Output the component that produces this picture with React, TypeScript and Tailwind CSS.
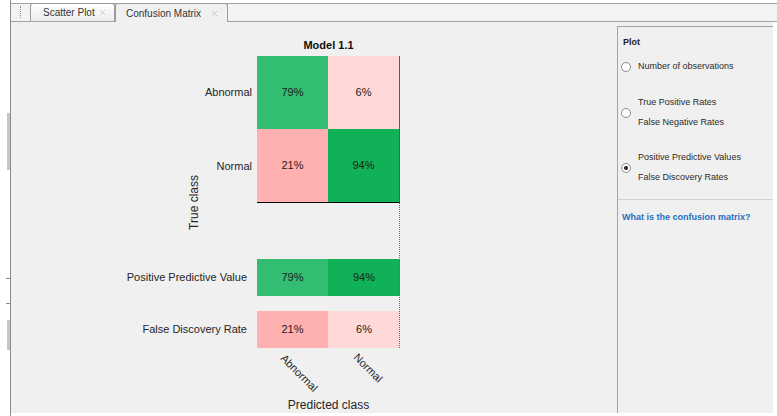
import { X } from 'lucide-react';

const GREEN = 'bg-[#32bd72]';
const DARK_GREEN = 'bg-[#11b157]';
const PINK = 'bg-[#ffb1b1]';
const LIGHT_PINK = 'bg-[#ffd8d8]';

function Tab({ label, active, className }: { label: string; active?: boolean; className: string }) {
  return (
    <div
      className={`flex h-[18px] items-center justify-between rounded-t-[3px] border border-b-0 border-[#9c9c9c] text-[10px] text-[#333] ${
        active ? 'relative -mb-px h-[19px] bg-[#f0f0f0]' : 'bg-gradient-to-b from-white to-[#ececec]'
      } ${className}`}
    >
      <span>{label}</span>
      <X size={9} strokeWidth={1.75} className="text-[#b4b4b4]" />
    </div>
  );
}

function Cell({ value, tone, className = '' }: { value: string; tone: string; className?: string }) {
  return (
    <div className={`flex items-center justify-center text-[11px] text-[#1c1c1c] ${tone} ${className}`}>
      {value}
    </div>
  );
}

function Radio({ checked, lines }: { checked?: boolean; lines: string[] }) {
  return (
    <div className="flex items-center pl-[3px]">
      <span className="flex h-[10px] w-[10px] items-center justify-center rounded-full border border-[#8a8a8a] bg-white">
        {checked && <span className="h-[4px] w-[4px] rounded-full bg-[#222]" />}
      </span>
      <div className="ml-[7px] flex flex-col gap-[9px] text-[9px] leading-[11px] text-[#2b2b2b]">
        {lines.map((line) => (
          <span key={line}>{line}</span>
        ))}
      </div>
    </div>
  );
}

function MatrixPlot() {
  return (
    <div className="grid flex-1 grid-cols-[176px_14px_56px_71px_72px] grid-rows-[34px_73px_74px_56px_37px_15px_37px_50px_14px] text-[#262626]">
      <div className="col-span-2 col-start-4 row-start-1 flex items-end justify-center pb-[4px] text-[11px] leading-[13px] font-bold text-[#111]">
        Model 1.1
      </div>

      <div className="col-start-2 row-span-6 row-start-2 flex items-center justify-center">
        <span className="rotate-180 text-[12px] leading-[14px] [writing-mode:vertical-rl]">True class</span>
      </div>

      <div className="col-start-3 row-start-2 flex items-center justify-end pr-[5px] text-[11px]">Abnormal</div>
      <div className="col-start-3 row-start-3 flex items-center justify-end pr-[5px] text-[11px]">Normal</div>

      <Cell value="79%" tone={GREEN} className="col-start-4 row-start-2" />
      <Cell value="6%" tone={LIGHT_PINK} className="col-start-5 row-start-2 border-r border-[#5a5a5a]" />
      <Cell value="21%" tone={PINK} className="col-start-4 row-start-3 border-b border-black" />
      <Cell value="94%" tone={DARK_GREEN} className="col-start-5 row-start-3 border-r border-b border-[#5a5a5a] border-b-black" />

      <div className="col-span-3 col-start-1 row-start-5 flex items-center justify-end pr-[10px] text-[11px] whitespace-nowrap">
        Positive Predictive Value
      </div>
      <div className="col-span-3 col-start-1 row-start-7 flex items-center justify-end pr-[10px] text-[11px] whitespace-nowrap">
        False Discovery Rate
      </div>

      <Cell value="79%" tone={GREEN} className="col-start-4 row-start-5" />
      <Cell value="94%" tone={DARK_GREEN} className="col-start-5 row-start-5" />
      <Cell value="21%" tone={PINK} className="col-start-4 row-start-7" />
      <Cell value="6%" tone={LIGHT_PINK} className="col-start-5 row-start-7" />

      {/* dotted edge below the matrix */}
      <div className="pointer-events-none col-start-5 row-span-4 row-start-4 border-r border-dotted border-[#6a6a6a]" />

      <div className="col-start-4 row-start-8">
        <span className="mt-[4px] ml-[30px] block w-max origin-top-left rotate-45 text-[11px] leading-[13px]">
          Abnormal
        </span>
      </div>
      <div className="col-start-5 row-start-8">
        <span className="mt-[3px] ml-[32px] block w-max origin-top-left rotate-45 text-[11px] leading-[13px]">
          Normal
        </span>
      </div>

      <div className="col-span-2 col-start-4 row-start-9 text-center text-[12px] leading-[14px]">Predicted class</div>
    </div>
  );
}

function OptionsPanel() {
  return (
    <div className="mt-[4px] flex w-[156px] flex-col border-t border-l border-[#a3a3a3]">
      <div className="pt-[10px] pl-[5px] text-[9px] leading-[11px] font-bold text-[#222]">Plot</div>
      <div className="mt-[13px]">
        <Radio lines={['Number of observations']} />
      </div>
      <div className="mt-[25px]">
        <Radio lines={['True Positive Rates', 'False Negative Rates']} />
      </div>
      <div className="mt-[24px]">
        <Radio checked lines={['Positive Predictive Values', 'False Discovery Rates']} />
      </div>
      <div className="mt-[16px] border-t border-[#d2d2d2]" />
      <div className="mt-[12px] pl-[4px] text-[9px] leading-[11px] font-bold text-[#1f6fc3]">
        What is the confusion matrix?
      </div>
    </div>
  );
}

export default function App() {
  return (
    <div className="flex h-[416px] w-[777px] overflow-hidden bg-white font-['Liberation_Sans',Arial,sans-serif]">
      {/* docked browser edge on the left */}
      <div className="flex w-[11px] flex-col items-end border-r border-[#8c8c8c] bg-white">
        <div className="mt-[113px] h-[57px] w-[3px] bg-[#c6c6c6]" />
        <div className="mt-[108px] h-px w-[4px] bg-[#8c8c8c]" />
        <div className="mt-[24px] h-px w-[4px] bg-[#8c8c8c]" />
        <div className="mt-[16px] h-[30px] w-[3px] bg-[#c6c6c6]" />
      </div>

      <div className="flex flex-1 flex-col">
        <div className="pt-[3px]">
          <div className="flex h-[19px] items-end border-t border-b border-[#a3a3a3] bg-[#f3f3f3]">
            <div className="mb-[3px] ml-[9px] h-[12px] border-l border-dotted border-[#8f8f8f]" />
            <Tab label="Scatter Plot" className="ml-[9px] w-[85px] pr-[7px] pl-[12px]" />
            <Tab label="Confusion Matrix" active className="w-[113px] pr-[8px] pl-[10px]" />
          </div>
        </div>

        <div className="flex h-[391px]">
          <div className="flex flex-1 bg-[#f0f0f0]">
            <MatrixPlot />
            <OptionsPanel />
          </div>
          <div className="w-[4px] bg-white" />
        </div>
      </div>
    </div>
  );
}
